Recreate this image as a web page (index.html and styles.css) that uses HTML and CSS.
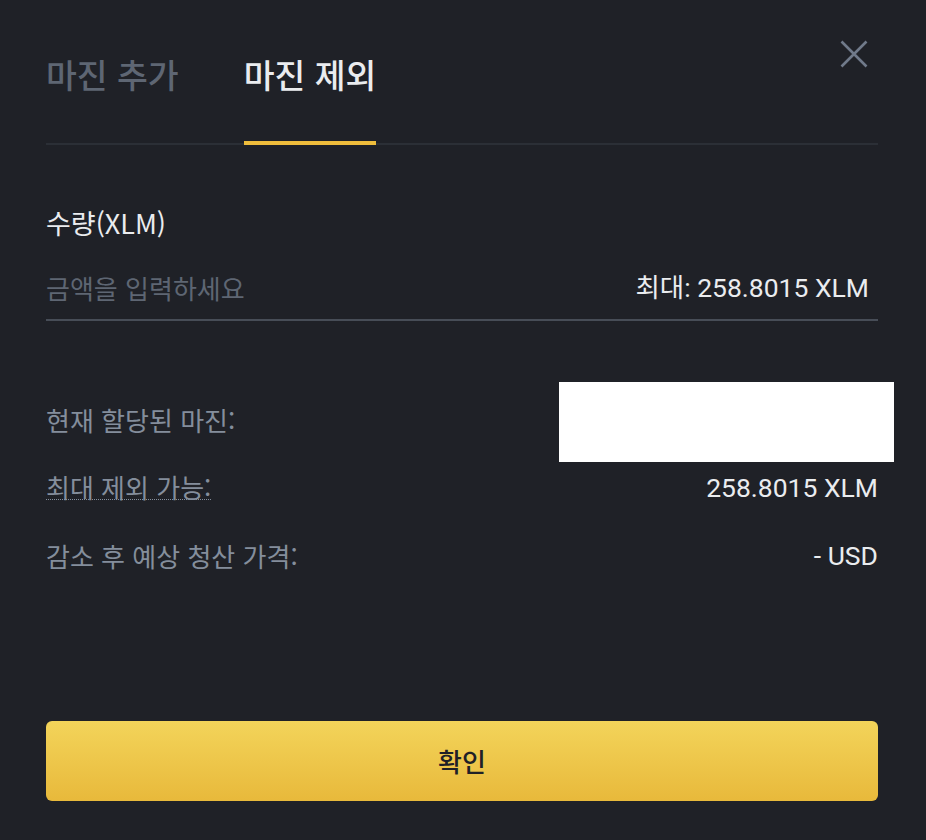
FILE: index.html
```html
<!DOCTYPE html>
<html lang="ko">
<head>
<meta charset="utf-8">
<title>마진 제외</title>
<link rel="stylesheet" href="styles.css">
</head>
<body>
<div class="dialog">
  <div class="header">
    <div class="tabs">
      <div class="tab">마진 추가</div>
      <div class="tab active">마진 제외</div>
    </div>
    <button class="close" aria-label="닫기">
      <svg width="28" height="28" viewBox="0 0 28 28"><path d="M1.5 1.5L26.5 26.5M26.5 1.5L1.5 26.5" stroke="#707a8a" stroke-width="2.6" fill="none"/></svg>
    </button>
  </div>

  <div class="field-label">수량(XLM)</div>
  <div class="input-row">
    <span class="placeholder">금액을 입력하세요</span>
    <span class="max">최대: 258.8015 XLM</span>
  </div>

  <div class="rows">
    <div class="row">
      <span class="row-label">현재 할당된 마진:</span>
      <span class="row-value"></span>
      <div class="redact"></div>
    </div>
    <div class="row">
      <span class="row-label dotted">최대 제외 가능:</span>
      <span class="row-value">258.8015 XLM</span>
    </div>
    <div class="row">
      <span class="row-label">감소 후 예상 청산 가격:</span>
      <span class="row-value">- USD</span>
    </div>
  </div>

  <button class="confirm">확인</button>
</div>
</body>
</html>
```
FILE: styles.css
```css
* { box-sizing: border-box; }
html, body {
  margin: 0;
  padding: 0;
  background: #1f2127;
}
body {
  font-family: "Roboto", "Noto Sans CJK KR", sans-serif;
  color: #eaecef;
}
.dialog {
  width: 926px;
  height: 840px;
  padding: 0 48px 0 46px;
}
.header {
  display: flex;
  justify-content: space-between;
  align-items: flex-start;
  padding-top: 40px;
  border-bottom: 2px solid #2b2f36;
}
.tabs {
  display: flex;
  gap: 65px;
}
.tab {
  font-family: "Noto Sans CJK KR", sans-serif;
  font-size: 33.5px;
  font-weight: 500;
  line-height: 44px;
  padding-top: 12px;
  padding-bottom: 45px;
  border-bottom: 4px solid transparent;
  margin-bottom: -2px;
  color: #5e6673;
}
.tab.active {
  color: #eaecef;
  border-bottom-color: #efbd3c;
}
.close {
  background: none;
  border: 0;
  padding: 0;
  margin-right: 10px;
  width: 28px;
  height: 28px;
  display: block;
}
.close svg { display: block; }
.field-label {
  margin-top: 62px;
  font-family: "Noto Sans CJK KR", sans-serif;
  font-size: 27px;
  line-height: 32px;
  color: #eaecef;
}
.input-row {
  margin-top: 25px;
  display: flex;
  justify-content: space-between;
  align-items: center;
  line-height: 48px;
  padding-bottom: 7px;
  border-bottom: 2px solid #474d57;
}
.placeholder {
  font-family: "Noto Sans CJK KR", sans-serif;
  font-size: 26px;
  color: #5e6673;
}
.max {
  font-size: 26.5px;
  font-weight: 400;
  color: #eaecef;
  padding-right: 9px;
}
.rows {
  margin-top: 64px;
}
.row {
  position: relative;
  display: flex;
  justify-content: space-between;
  align-items: center;
  height: 68px;
}
.row-label {
  font-family: "Noto Sans CJK KR", sans-serif;
  font-size: 26px;
  color: #848e9c;
}
.row-label.dotted {
  display: inline-block;
  line-height: 24px;
  border-bottom: 1px dotted #848e9c;
  margin-top: 1px;
}
.row-value {
  font-size: 26.5px;
  font-weight: 400;
  color: #eaecef;
}
.redact {
  position: absolute;
  top: -3px;
  right: -16px;
  width: 335px;
  height: 80px;
  background: #ffffff;
}
.confirm {
  display: block;
  width: 100%;
  height: 80px;
  margin-top: 132px;
  border: 0;
  border-radius: 6px;
  background: linear-gradient(180deg, #f3d45a 0%, #e8b93b 100%);
  font-family: "Noto Sans CJK KR", sans-serif;
  font-size: 26px;
  font-weight: 500;
  line-height: 76px;
  color: #1f2127;
}
```
